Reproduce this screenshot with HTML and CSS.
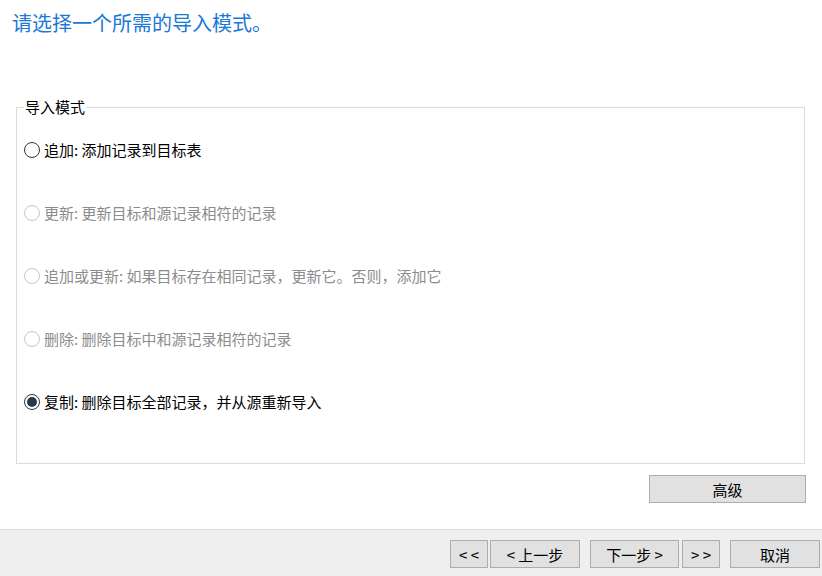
FILE: index.html
```html
<!DOCTYPE html>
<html lang="zh-CN">
<head>
    <meta charset="UTF-8">
    <title>导入向导</title>
    <link rel="stylesheet" href="styles.css">
</head>
<body>

<div class="page">
    <div class="main">
        <h1>请选择一个所需的导入模式。</h1>

        <fieldset class="mode-group">
            <legend>导入模式</legend>
            <label class="option">
                <span class="radio"></span>
                <span>追加: 添加记录到目标表</span>
            </label>
            <label class="option disabled">
                <span class="radio"></span>
                <span>更新: 更新目标和源记录相符的记录</span>
            </label>
            <label class="option disabled">
                <span class="radio"></span>
                <span>追加或更新: 如果目标存在相同记录，更新它。否则，添加它</span>
            </label>
            <label class="option disabled">
                <span class="radio"></span>
                <span>删除: 删除目标中和源记录相符的记录</span>
            </label>
            <label class="option">
                <span class="radio checked"></span>
                <span>复制: 删除目标全部记录，并从源重新导入</span>
            </label>
        </fieldset>

        <div class="advanced-row">
            <button class="btn btn-advanced">高级</button>
        </div>
    </div>

    <div class="footer">
        <button class="btn btn-small">&lt; &lt;</button>
        <button class="btn btn-wide">&lt; 上一步</button>
        <button class="btn btn-wide btn-next">下一步 &gt;</button>
        <button class="btn btn-small">&gt; &gt;</button>
        <button class="btn btn-wide btn-cancel">取消</button>
    </div>
</div>

</body>
</html>
```

FILE: styles.css
```css
body {
    margin: 0;
    padding: 0;
    background-color: #fff;
    color: #000;
    font-family: "Noto Sans CJK SC", "Noto Sans", sans-serif;
    font-size: 15px;
}

.page {
    height: 576px;
    display: flex;
    flex-direction: column;
}

.main {
    flex: 1;
}

h1 {
    margin: 0;
    padding: 9px 12px 0;
    font-size: 20px;
    font-weight: normal;
    line-height: 28px;
    color: #1a78d6;
}

.mode-group {
    margin: 62px 17px 0 16px;
    padding: 0 0 40px 7px;
    border: 1px solid #dcdcdc;
    height: 365px;
    box-sizing: border-box;
}

.mode-group legend {
    padding: 0 1px;
    margin-left: 0;
    line-height: 16px;
}

.option {
    display: flex;
    align-items: center;
    height: 63px;
    gap: 4px;
}

.option:first-of-type {
    margin-top: 3px;
}

.option.disabled {
    color: #8c8c8c;
}

.radio {
    width: 14px;
    height: 14px;
    border: 1px solid #333;
    border-radius: 50%;
    display: flex;
    align-items: center;
    justify-content: center;
    flex-shrink: 0;
}

.disabled .radio {
    border-color: #c6c6c6;
}

.radio.checked::after {
    content: "";
    width: 10px;
    height: 10px;
    border-radius: 50%;
    background-color: #26394d;
}

.advanced-row {
    display: flex;
    justify-content: flex-end;
    padding: 11px 16px 0 0;
}

.btn {
    height: 28px;
    border: 1px solid #adadad;
    background-color: #e1e1e1;
    font-family: inherit;
    font-size: 15px;
    color: #000;
    padding: 0;
    box-sizing: border-box;
}

.btn-advanced {
    width: 157px;
}

.footer {
    height: 47px;
    box-sizing: border-box;
    border-top: 1px solid #dadada;
    background-color: #efefef;
    display: flex;
    justify-content: flex-end;
    align-items: flex-start;
    padding: 10px 2px 0 0;
    gap: 2px;
}

.btn-small {
    width: 38px;
}

.btn-wide {
    width: 90px;
}

.btn-next {
    width: 89px;
    margin-left: 8px;
    margin-right: 1px;
}

.btn-cancel {
    margin-left: 8px;
}
```
